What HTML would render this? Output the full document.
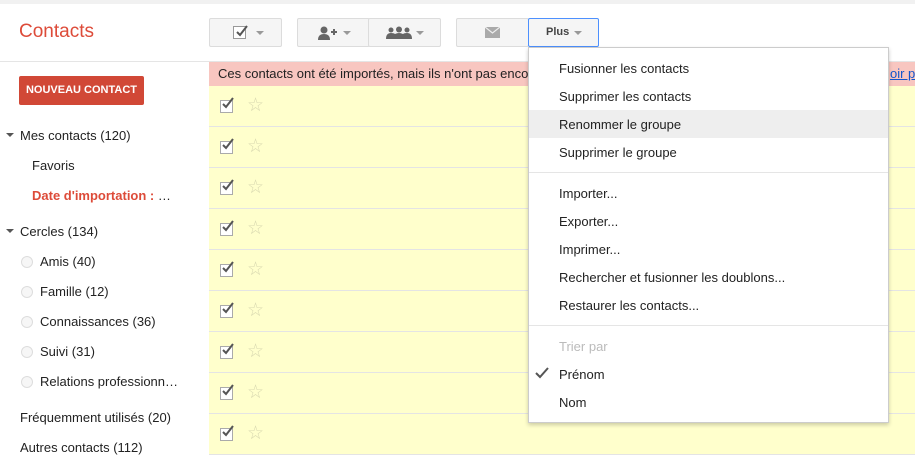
<!DOCTYPE html>
<html><head><meta charset="utf-8"><style>
*{margin:0;padding:0;box-sizing:border-box}
body{width:915px;height:447px;overflow:hidden;background:#fff;font-family:"Liberation Sans",Arial,sans-serif;font-size:13px;color:#222;position:relative}
.a{position:absolute}
.btn{position:absolute;top:18px;height:29px;background:#f5f5f5;border:1px solid #dcdcdc;border-radius:2px}
.caret{display:inline-block;width:0;height:0;border-left:4px solid transparent;border-right:4px solid transparent;border-top:4px solid #999;vertical-align:middle}
.row{position:absolute;left:209px;width:706px;height:41px;background:#ffffcc;border-bottom:1px solid #e4e4e4}
.cb{position:absolute;left:11px;top:14px;width:13px;height:13px;border:1px solid #aaa;background:#fff}
.star{position:absolute;left:38px;top:8px;color:#d8d8b0;font-size:19px}
.nav{position:absolute;font-size:13px;color:#222}
.rad{position:absolute;left:21px;width:12px;height:12px;border-radius:50%;border:1px solid #ddd;background:#f6f6f6}
.mi{position:absolute;left:30px;font-size:13px;color:#222}
</style></head><body>
<div class="a" style="left:0;top:0;width:915px;height:4px;background:#f1f1f1"></div>
<div class="a" style="left:19px;top:21px;font-size:19px;color:#dd4b39">Contacts</div>
<div class="a" style="left:0;top:61px;width:915px;height:1px;background:#e5e5e5"></div>

<div class="btn" style="left:209px;width:73px"><div class="a" style="left:23px;top:7px;width:13px;height:13px;border:1px solid #999;background:#fff"></div><svg class="a" style="left:24px;top:5px" width="16" height="14"><path d="M3 8l3 3 7-9" stroke="#555" stroke-width="2" fill="none"/></svg><span class="caret a" style="left:46px;top:12px"></span></div>
<div class="btn" style="left:297px;width:73px"><svg class="a" style="left:19px;top:7px" width="24" height="14"><circle cx="7" cy="4" r="3.5" fill="#666"/><path d="M1 14q0-6 6-6t6 6z" fill="#666"/><path d="M14 6h6M17 3v6" stroke="#666" stroke-width="2"/></svg><span class="caret a" style="left:45px;top:12px"></span></div>
<div class="btn" style="left:368px;width:73px"><svg class="a" style="left:17px;top:7px" width="28" height="13"><circle cx="5" cy="4" r="2.5" fill="#666"/><circle cx="13" cy="3.5" r="3" fill="#666"/><circle cx="21" cy="4" r="2.5" fill="#666"/><path d="M0 13q0-6 5-6 3 0 4 1 2-1 4-1t4 1q1-1 4-1 5 0 5 6z" fill="#666"/></svg><span class="caret a" style="left:47px;top:12px"></span></div>
<div class="btn" style="left:456px;width:73px"><svg class="a" style="left:28px;top:8px" width="15" height="11"><rect width="15" height="11" fill="#aaa"/><path d="M0 0l7.5 6 7.5-6" stroke="#eee" stroke-width="1.2" fill="none"/></svg></div>
<div class="btn" style="left:528px;width:71px;border-color:#4d90fe;background:#f5f5f5"><span class="a" style="left:17px;top:7px;font-weight:bold;font-size:11px;color:#444">Plus</span><span class="caret a" style="left:45px;top:12px"></span></div>

<div class="a" style="left:19px;top:76px;width:125px;height:29px;background:#d14836;border-radius:2px;color:#fff;font-weight:bold;font-size:11px;text-align:center;line-height:29px">NOUVEAU CONTACT</div>

<div class="a" style="left:209px;top:62px;width:706px;height:24px;background:#f8c6c0"></div>
<div class="a" style="left:218px;top:66px;font-size:13px">Ces contacts ont été importés, mais ils n'ont pas encore été ajoutés à un groupe.</div>

<div class="row" style="top:86px"><div class="cb"></div><svg class="a" style="left:12px;top:10px" width="16" height="14"><path d="M2 8l3 3 7-9" stroke="#555" stroke-width="2" fill="none"/></svg><span class="star">☆</span></div>
<div class="row" style="top:127px"><div class="cb"></div><svg class="a" style="left:12px;top:10px" width="16" height="14"><path d="M2 8l3 3 7-9" stroke="#555" stroke-width="2" fill="none"/></svg><span class="star">☆</span></div>
<div class="row" style="top:168px"><div class="cb"></div><svg class="a" style="left:12px;top:10px" width="16" height="14"><path d="M2 8l3 3 7-9" stroke="#555" stroke-width="2" fill="none"/></svg><span class="star">☆</span></div>
<div class="row" style="top:209px"><div class="cb"></div><svg class="a" style="left:12px;top:10px" width="16" height="14"><path d="M2 8l3 3 7-9" stroke="#555" stroke-width="2" fill="none"/></svg><span class="star">☆</span></div>
<div class="row" style="top:250px"><div class="cb"></div><svg class="a" style="left:12px;top:10px" width="16" height="14"><path d="M2 8l3 3 7-9" stroke="#555" stroke-width="2" fill="none"/></svg><span class="star">☆</span></div>
<div class="row" style="top:291px"><div class="cb"></div><svg class="a" style="left:12px;top:10px" width="16" height="14"><path d="M2 8l3 3 7-9" stroke="#555" stroke-width="2" fill="none"/></svg><span class="star">☆</span></div>
<div class="row" style="top:332px"><div class="cb"></div><svg class="a" style="left:12px;top:10px" width="16" height="14"><path d="M2 8l3 3 7-9" stroke="#555" stroke-width="2" fill="none"/></svg><span class="star">☆</span></div>
<div class="row" style="top:373px"><div class="cb"></div><svg class="a" style="left:12px;top:10px" width="16" height="14"><path d="M2 8l3 3 7-9" stroke="#555" stroke-width="2" fill="none"/></svg><span class="star">☆</span></div>
<div class="row" style="top:414px"><div class="cb"></div><svg class="a" style="left:12px;top:10px" width="16" height="14"><path d="M2 8l3 3 7-9" stroke="#555" stroke-width="2" fill="none"/></svg><span class="star">☆</span></div>

<span class="caret a" style="left:6px;top:133px;border-top-color:#555"></span>
<div class="nav" style="left:20px;top:128px">Mes contacts (120)</div>
<div class="nav" style="left:32px;top:158px">Favoris</div>
<div class="nav" style="left:32px;top:188px;color:#dd4b39;font-weight:bold">Date d'importation : <span style="color:#222;font-weight:normal">…</span></div>
<span class="caret a" style="left:6px;top:229px;border-top-color:#555"></span>
<div class="nav" style="left:20px;top:224px">Cercles (134)</div>
<div class="rad" style="top:256px"></div><div class="nav" style="left:40px;top:254px">Amis (40)</div>
<div class="rad" style="top:286px"></div><div class="nav" style="left:40px;top:284px">Famille (12)</div>
<div class="rad" style="top:316px"></div><div class="nav" style="left:40px;top:314px">Connaissances (36)</div>
<div class="rad" style="top:346px"></div><div class="nav" style="left:40px;top:344px">Suivi (31)</div>
<div class="rad" style="top:376px"></div><div class="nav" style="left:40px;top:374px">Relations professionn…</div>
<div class="nav" style="left:20px;top:410px">Fréquemment utilisés (20)</div>
<div class="nav" style="left:20px;top:440px">Autres contacts (112)</div>

<div class="a" style="left:528px;top:47px;width:361px;height:376px;background:#fff;border:1px solid #ccc;box-shadow:0 2px 4px rgba(0,0,0,.2)">
<div class="a" style="left:0;top:62px;width:359px;height:28px;background:#eee"></div>
<div class="mi" style="top:13px">Fusionner les contacts</div>
<div class="mi" style="top:41px">Supprimer les contacts</div>
<div class="mi" style="top:69px">Renommer le groupe</div>
<div class="mi" style="top:97px">Supprimer le groupe</div>
<div class="a" style="left:0;top:124px;width:359px;height:1px;background:#e5e5e5"></div>
<div class="mi" style="top:138px">Importer...</div>
<div class="mi" style="top:166px">Exporter...</div>
<div class="mi" style="top:194px">Imprimer...</div>
<div class="mi" style="top:222px">Rechercher et fusionner les doublons...</div>
<div class="mi" style="top:250px">Restaurer les contacts...</div>
<div class="a" style="left:0;top:277px;width:359px;height:1px;background:#e5e5e5"></div>
<div class="mi" style="top:291px;color:#bbb">Trier par</div>
<svg class="a" style="left:6px;top:319px" width="14" height="12"><path d="M1 6l4 4 8-9" stroke="#555" stroke-width="2" fill="none"/></svg>
<div class="mi" style="top:319px">Prénom</div>
<div class="mi" style="top:347px">Nom</div>
</div>
<div class="a" style="left:890px;top:66px;font-size:13px;color:#15c;text-decoration:underline;white-space:nowrap">oir plus</div>
</body></html>
